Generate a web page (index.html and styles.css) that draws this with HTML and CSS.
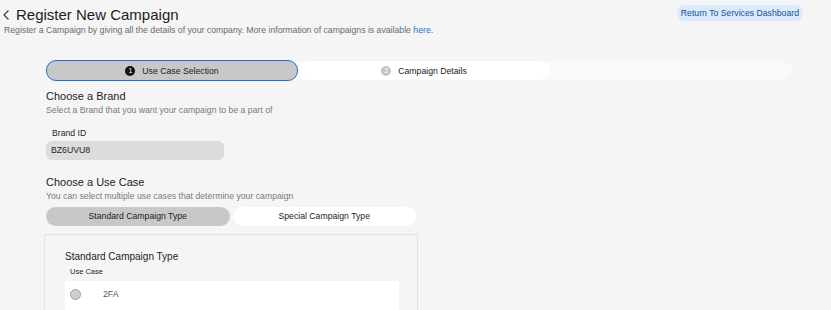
FILE: index.html
```html
<!DOCTYPE html>
<html lang="en">
<head>
  <meta charset="UTF-8" />
  <title>Register New Campaign</title>
  <link rel="stylesheet" href="styles.css">
</head>
<body>

  <header class="page-head">
    <div class="head-text">
      <h1 class="title">
        <svg class="back" width="12" height="12" viewBox="0 0 12 12"><path d="M6.5 1.5 L2 6 L6.5 10.5" fill="none" stroke="#333" stroke-width="1.1"/></svg>Register New Campaign
      </h1>
      <p class="lead">Register a Campaign by giving all the details of your company. More information of campaigns is available <a href="#">here.</a></p>
    </div>
    <button class="return-btn">Return To Services Dashboard</button>
  </header>

  <section class="wizard">
    <div class="stepper">
      <div class="step active"><span class="step-num">1</span>Use Case Selection</div>
      <div class="step"><span class="step-num">2</span>Campaign Details</div>
    </div>

    <div class="block">
      <h2 class="block-title">Choose a Brand</h2>
      <p class="block-sub">Select a Brand that you want your campaign to be a part of</p>
      <label class="field-label">Brand ID</label>
      <div class="field">BZ6UVU8</div>
    </div>

    <div class="block">
      <h2 class="block-title">Choose a Use Case</h2>
      <p class="block-sub">You can select multiple use cases that determine your campaign</p>
      <div class="tabs">
        <div class="tab selected">Standard Campaign Type</div>
        <div class="tab">Special Campaign Type</div>
      </div>
      <div class="card">
        <h3 class="card-title">Standard Campaign Type</h3>
        <div class="col-label">Use Case</div>
        <div class="list">
          <div class="list-row"><span class="radio"></span>2FA</div>
        </div>
      </div>
    </div>
  </section>

</body>
</html>
```

FILE: styles.css
```css
/* Page */
body {
  margin: 0;
  height: 310px;
  background-color: #f5f5f5;
  font-family: "Liberation Sans", Arial, sans-serif;
  color: #1d1d1d;
  overflow: hidden;
}

/* Header */
.page-head {
  display: flex;
  justify-content: space-between;
  align-items: flex-start;
  padding: 5px 28px 0 2px;
}

.title {
  display: flex;
  align-items: center;
  margin: 0;
  font-size: 15px;
  font-weight: normal;
  line-height: 20px;
}

.back {
  margin-right: 2px;
}

.lead {
  margin: 0 0 0 2px;
  font-size: 8.7px;
  line-height: 10px;
  color: #6b6b6b;
}

.lead a {
  color: #1a6fc9;
  text-decoration: none;
}

.return-btn {
  border: none;
  border-radius: 8px;
  background-color: #d9eafc;
  color: #1d4f8a;
  font-family: inherit;
  font-size: 8.7px;
  padding: 3px 4px;
  margin-top: 0;
}

/* Wizard */
.wizard {
  padding: 26px 0 0 46px;
}

.stepper {
  display: flex;
  width: 746px;
  height: 19px;
  background-color: #f9f9f9;
  border-radius: 10px;
}

.step {
  width: 252px;
  display: flex;
  align-items: center;
  justify-content: center;
  background-color: #fff;
  border-radius: 10px;
  font-size: 8.7px;
  color: #222;
}

.step.active {
  background-color: #c8c8c8;
  border: 1px solid #1f6fd1;
  margin-top: -1px;
  height: 19px;
  box-sizing: content-box;
  width: 250px;
}

.step-num {
  width: 10px;
  height: 10px;
  border-radius: 50%;
  background-color: #c4c4c4;
  color: #fff;
  font-size: 7px;
  display: inline-flex;
  align-items: center;
  justify-content: center;
  margin-right: 7px;
}

.step.active .step-num {
  background-color: #111;
}

/* Sections */
.block {
  padding-top: 9px;
}

.block-title {
  margin: 0;
  font-size: 11px;
  font-weight: normal;
  line-height: 14px;
}

.block-sub {
  margin: 2px 0 0;
  font-size: 8.7px;
  color: #7a7a7a;
}

.field-label {
  display: block;
  margin: 13px 0 3px 6px;
  font-size: 8.7px;
}

.field {
  width: 173px;
  height: 19px;
  line-height: 19px;
  padding-left: 5px;
  background-color: #dcdcdc;
  border-radius: 6px;
  font-size: 8.7px;
}

.block + .block {
  padding-top: 15px;
}

/* Tabs */
.tabs {
  display: flex;
  gap: 3px;
  margin-top: 6px;
  width: 370px;
}

.tab {
  flex: 1;
  height: 19px;
  line-height: 19px;
  text-align: center;
  background-color: #fff;
  border-radius: 10px;
  font-size: 8.7px;
}

.tab.selected {
  background-color: #c8c8c8;
}

/* Use case card */
.card {
  margin: 8px 0 0 -2px;
  width: 352px;
  padding: 16px 0 0 20px;
  border: 1px solid #e2e2e2;
  border-bottom: none;
  height: 60px;
}

.card-title {
  margin: 0;
  font-size: 10px;
  font-weight: normal;
}

.col-label {
  margin: 5px 0 0 5px;
  font-size: 7.5px;
}

.list {
  margin-top: 5px;
  width: 334px;
  height: 30px;
  background-color: #fff;
}

.list-row {
  display: flex;
  align-items: center;
  height: 26px;
  padding-left: 5px;
  font-size: 8.7px;
  color: #555;
}

.radio {
  width: 9px;
  height: 9px;
  border-radius: 50%;
  background-color: #cfcfcf;
  border: 1px solid #9e9e9e;
  margin-right: 22px;
}
```
